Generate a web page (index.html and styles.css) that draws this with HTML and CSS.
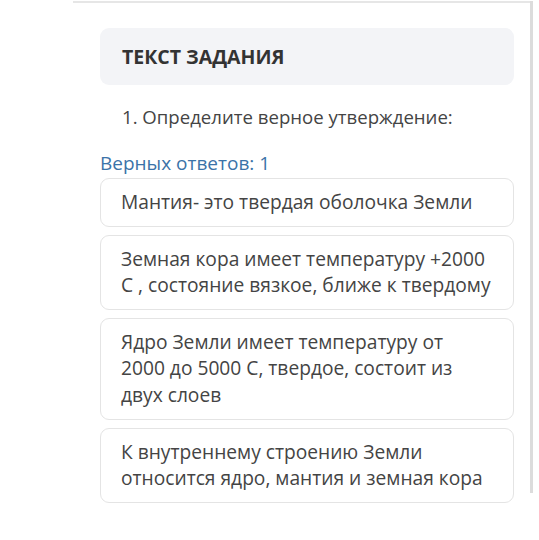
FILE: index.html
```html
<!DOCTYPE html>
<html lang="ru">

<head>
    <meta charset="UTF-8">
    <meta name="viewport" content="width=device-width, initial-scale=1.0">
    <title>Тест</title>
    <link rel="stylesheet" href="styles.css">
</head>

<body>
    <div class="page">
        <div class="content">
            <div class="task-head">
                <h2>ТЕКСТ ЗАДАНИЯ</h2>
            </div>
            <p class="question">1. Определите верное утверждение:</p>
            <p class="count">Верных ответов: 1</p>
            <div class="answers">
                <div class="answer">Мантия- это твердая оболочка Земли</div>
                <div class="answer">Земная кора имеет температуру +2000 С , состояние вязкое, ближе к твердому</div>
                <div class="answer">Ядро Земли имеет температуру от 2000&nbsp;до 5000 С, твердое, состоит из двух слоев</div>
                <div class="answer">К внутреннему строению Земли относится ядро, мантия и земная кора</div>
            </div>
        </div>
    </div>
</body>

</html>
```

FILE: styles.css
```css
* {
    margin: 0;
    padding: 0;
    box-sizing: border-box;
}

body {
    background-color: #fff;
    font-family: "Open Sans", "Liberation Sans", sans-serif;
    color: #444;
}

.page {
    position: relative;
    width: 460px;
    margin-left: 73px;
    margin-top: 1px;
    padding-bottom: 30px;
    border-top: 2px solid #e6e6e6;
}

/* полоса прокрутки справа */
.page::after {
    content: "";
    position: absolute;
    top: -2px;
    right: 0;
    width: 3px;
    height: 492px;
    background-color: #dcdcdc;
}

.content {
    padding: 25px 19px 0 27px;
}

.task-head {
    background-color: #f3f4f7;
    border-radius: 9px;
    height: 57px;
    display: flex;
    align-items: center;
    padding-left: 22px;
}

.task-head h2 {
    font-size: 19.5px;
    font-weight: 700;
    color: #333;
}

.question {
    font-size: 18.6px;
    margin: 18px 0 0 22px;
    line-height: 28px;
}

.count {
    font-size: 19px;
    color: #3b73a8;
    margin: 20px 0 3px 0;
    line-height: 24px;
}

.answers {
    display: flex;
    flex-direction: column;
    gap: 8px;
}

.answer {
    border: 1.5px solid #e4e4e4;
    border-radius: 9px;
    padding: 10px 20.5px 10px 20px;
    font-size: 19.2px;
    line-height: 26.6px;
}
```
